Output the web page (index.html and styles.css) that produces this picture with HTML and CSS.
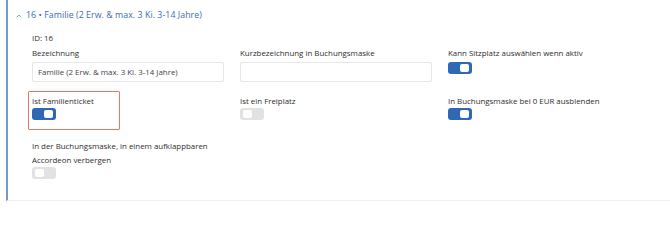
FILE: index.html
```html
<!DOCTYPE html>
<html lang="de">
<head>
<meta charset="utf-8">
<link rel="stylesheet" href="styles.css">
</head>
<body>
<section class="panel">
  <header class="panel-head">
    <svg class="chev" width="6" height="4" viewBox="0 0 6 4"><path d="M0.6 3.4 L3 1 L5.4 3.4" fill="none" stroke="#5bb89a" stroke-width="0.9"/></svg>
    <span class="title">16 • Familie (2 Erw. &amp; max. 3 Ki. 3-14 Jahre)</span>
  </header>
  <div class="body">
    <div class="id">ID: 16</div>
    <div class="grid row1">
      <div class="field">
        <label class="lbl">Bezeichnung</label>
        <div class="input">Familie (2 Erw. &amp; max. 3 Ki. 3-14 Jahre)</div>
      </div>
      <div class="field">
        <label class="lbl">Kurzbezeichnung in Buchungsmaske</label>
        <div class="input"></div>
      </div>
      <div class="field">
        <label class="lbl">Kann Sitzplatz auswählen wenn aktiv</label>
        <span class="toggle on"></span>
      </div>
    </div>
    <div class="grid row2">
      <div class="field hl">
        <span class="highlight"></span>
        <label class="lbl">Ist Familienticket</label>
        <span class="toggle on"></span>
      </div>
      <div class="field">
        <label class="lbl">Ist ein Freiplatz</label>
        <span class="toggle off"></span>
      </div>
      <div class="field">
        <label class="lbl">In Buchungsmaske bei 0 EUR ausblenden</label>
        <span class="toggle on"></span>
      </div>
    </div>
    <div class="grid row3">
      <div class="field">
        <label class="lbl">In der Buchungsmaske, in einem aufklappbaren Accordeon verbergen</label>
        <span class="toggle off"></span>
      </div>
    </div>
  </div>
</section>
</body>
</html>
```
FILE: styles.css
```css
* { box-sizing: border-box; }
html, body { margin: 0; padding: 0; background: #fff; }
body {
  font-family: "Open Sans", "Noto Sans", sans-serif;
  font-size: 7.9px;
  color: #2e2e2e;
  width: 670px;
  height: 202px;
  overflow: hidden;
}
.panel {
  margin-left: 6px;
  border-left: 2px solid #7398c9;
  border-bottom: 1px solid #f0f0f0;
  height: 201px;
  width: 664px;
}
.panel-head {
  display: flex;
  align-items: center;
  height: 30px;
  padding-left: 8px;
  gap: 4px;
}
.chev { display: block; margin-top: 1px; }
.title {
  color: #3a6db3;
  font-size: 8.8px;
  letter-spacing: 0.05px;
}
.body { padding-left: 24px; }
.id { height: 16px; line-height: 16px; margin-top: 0; }
.grid {
  display: grid;
  grid-template-columns: 192px 192px 192px;
  column-gap: 16px;
}
.field { position: relative; display: flex; flex-direction: column; align-items: flex-start; }
.lbl { display: block; line-height: 14px; }
.input {
  margin-top: 2px;
  width: 192px;
  height: 20px;
  border: 1px solid #e6e6e6;
  border-radius: 2px;
  padding: 0 5px;
  line-height: 18px;
  color: #444;
}
.row1 .toggle { margin-top: 2px; }
.row2 { margin-top: 12px; }
.row3 { margin-top: 19px; }
.row3 .lbl { width: 210px; }
.toggle {
  position: relative;
  display: block;
  width: 24px;
  height: 12px;
  border-radius: 3px;
}
.toggle::after {
  content: "";
  position: absolute;
  top: 2px;
  width: 9px;
  height: 8px;
  border-radius: 2px;
  background: #fff;
}
.toggle.on { background: #2f68b5; }
.toggle.on::after { right: 3px; }
.toggle.off { background: #e2e2e2; }
.toggle.off::after { left: 3px; }
.highlight {
  position: absolute;
  left: -4px;
  top: -3px;
  width: 92px;
  height: 39px;
  border: 1px solid #e07b68;
  border-radius: 1px;
}
```
